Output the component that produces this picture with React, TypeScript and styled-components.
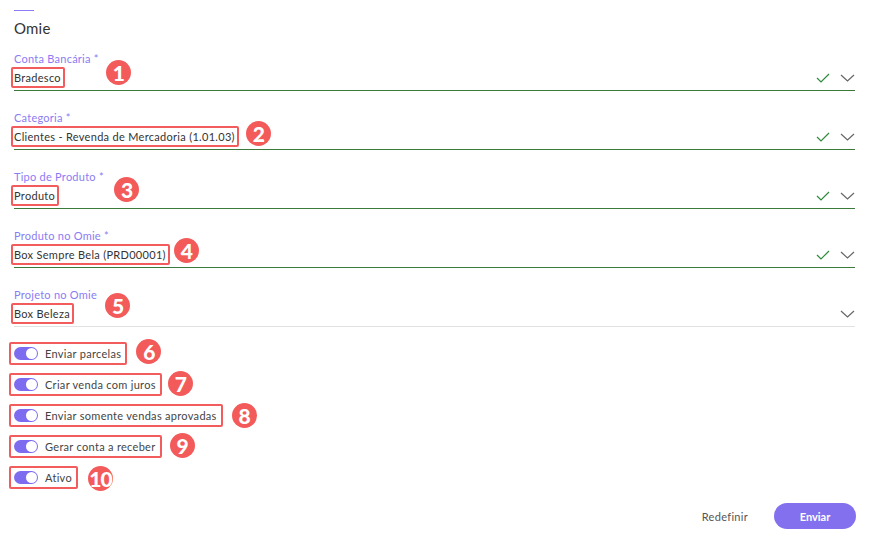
import React from "react";
import styled, { createGlobalStyle } from "styled-components";

const Global = createGlobalStyle`
  html, body { margin: 0; padding: 0; background: #fff; }
  body { font-family: Lato, "Open Sans", sans-serif; color: #333; }
  * { box-sizing: border-box; }
`;

const Page = styled.div`
  width: 872px;
  height: 536px;
  padding: 10px 17px 0 14px;
  display: flex;
  flex-direction: column;
  position: relative;
`;

const Accent = styled.div`
  width: 20px;
  height: 1px;
  background: #8b7cf3;
`;

const Title = styled.h1`
  margin: 8px 0 0;
  font-size: 15px;
  font-weight: 400;
  line-height: 18px;
  letter-spacing: 0.2px;
  color: #333;
`;

const Field = styled.div`
  display: flex;
  flex-direction: column;
  margin-top: ${(p: { $first?: boolean }) => (p.$first ? "15px" : "20px")};
`;

const Label = styled.div`
  font-size: 11px;
  line-height: 14px;
  letter-spacing: 0.25px;
  color: #8b7cf3;
`;

const Row = styled.div<{ $valid: boolean }>`
  display: flex;
  align-items: center;
  height: 24px;
  margin-top: 1px;
  padding-bottom: 2px;
  border-bottom: 1px solid ${(p) => (p.$valid ? "#3c7a3c" : "#e2e2e2")};
`;

const Boxed = styled.span`
  display: inline-flex;
  align-items: center;
  margin-left: -3px;
  padding: 0 2px 0 1px;
  height: 21px;
  border: 2px solid #f25c5c;
  border-radius: 2px;
  font-size: 11px;
  letter-spacing: 0.3px;
  color: #333;
  white-space: nowrap;
`;

const Badge = styled.span<{ $dx: number; $dy: number }>`
  display: inline-flex;
  align-items: center;
  justify-content: center;
  width: 25px;
  height: 25px;
  border-radius: 50%;
  background: #f35b5b;
  color: #fff;
  font-family: Lato, sans-serif;
  font-weight: 900;
  font-size: 21px;
  letter-spacing: -1px;
  margin-left: ${(p) => p.$dx}px;
  transform: translateY(${(p) => p.$dy}px);
  flex: none;
`;

const Spacer = styled.div`
  flex: 1;
`;

const Icons = styled.div`
  display: flex;
  align-items: center;
  gap: 10px;
`;

const Toggles = styled.div`
  display: flex;
  flex-direction: column;
  gap: 8px;
  margin-top: 15px;
`;

const ToggleRow = styled.div`
  display: flex;
  align-items: center;
  height: 23px;
`;

const ToggleBox = styled.label`
  display: inline-flex;
  align-items: center;
  gap: 7px;
  height: 23px;
  margin-left: -5px;
  padding: 0 4px 0 3px;
  border: 2px solid #f25c5c;
  border-radius: 2px;
  font-size: 11px;
  letter-spacing: 0.3px;
  color: #444;
  white-space: nowrap;
`;

const Track = styled.span`
  position: relative;
  width: 24px;
  height: 13px;
  border-radius: 7px;
  background: #7d6cf0;
  flex: none;
`;

const Knob = styled.span`
  position: absolute;
  right: 1px;
  top: 1px;
  width: 11px;
  height: 11px;
  border-radius: 50%;
  background: #fff;
`;

const Footer = styled.div`
  display: flex;
  justify-content: flex-end;
  align-items: center;
  gap: 26px;
  margin-top: auto;
  margin-bottom: 7px;
  margin-right: -1px;
`;

const LinkButton = styled.button`
  background: none;
  border: 0;
  padding: 0;
  font-family: inherit;
  font-size: 11px;
  letter-spacing: 0.3px;
  color: #555;
`;

const PrimaryButton = styled.button`
  width: 82px;
  height: 26px;
  border: 0;
  border-radius: 13px;
  background: #8270ee;
  color: #fff;
  font-family: inherit;
  font-weight: 700;
  font-size: 11px;
`;

const Check = () => (
  <svg width="14" height="10" viewBox="0 0 14 10">
    <path d="M1 5 L5 9 L13 1" fill="none" stroke="#2e8b3a" strokeWidth="1.2" />
  </svg>
);

const Chevron = () => (
  <svg width="15" height="8" viewBox="0 0 15 8">
    <path d="M1 1 L7.5 7 L14 1" fill="none" stroke="#666" strokeWidth="1.2" />
  </svg>
);

type F = { label: string; value: string; n: number; dx: number; dy: number; valid: boolean };

const fields: F[] = [
  { label: "Conta Bancária *", value: "Bradesco", n: 1, dx: 41, dy: -5, valid: true },
  { label: "Categoria *", value: "Clientes - Revenda de Mercadoria (1.01.03)", n: 2, dx: 7, dy: -3, valid: true },
  { label: "Tipo de Produto *", value: "Produto", n: 3, dx: 55, dy: -6, valid: true },
  { label: "Produto no Omie *", value: "Box Sempre Bela (PRD00001)", n: 4, dx: 4, dy: -4, valid: true },
  { label: "Projeto no Omie", value: "Box Beleza", n: 5, dx: 31, dy: -8, valid: false },
];

type T = { label: string; n: number; dx: number; dy: number };
const toggles: T[] = [
  { label: "Enviar parcelas", n: 6, dx: 9, dy: -2 },
  { label: "Criar venda com juros", n: 7, dx: 6, dy: -1 },
  { label: "Enviar somente vendas aprovadas", n: 8, dx: 9, dy: 0 },
  { label: "Gerar conta a receber", n: 9, dx: 8, dy: -1 },
  { label: "Ativo", n: 10, dx: 10, dy: 1 },
];

export default function App() {
  return (
    <>
      <Global />
      <Page>
        <Accent />
        <Title>Omie</Title>
        {fields.map((f, i) => (
          <Field key={f.n} $first={i === 0}>
            <Label>{f.label}</Label>
            <Row $valid={f.valid}>
              <Boxed>{f.value}</Boxed>
              <Badge $dx={f.dx} $dy={f.dy}>{f.n}</Badge>
              <Spacer />
              <Icons>
                {f.valid && <Check />}
                <Chevron />
              </Icons>
            </Row>
          </Field>
        ))}
        <Toggles>
          {toggles.map((t) => (
            <ToggleRow key={t.n}>
              <ToggleBox>
                <Track>
                  <Knob />
                </Track>
                {t.label}
              </ToggleBox>
              <Badge $dx={t.dx} $dy={t.dy}>{t.n}</Badge>
            </ToggleRow>
          ))}
        </Toggles>
        <Footer>
          <LinkButton>Redefinir</LinkButton>
          <PrimaryButton>Enviar</PrimaryButton>
        </Footer>
      </Page>
    </>
  );
}
